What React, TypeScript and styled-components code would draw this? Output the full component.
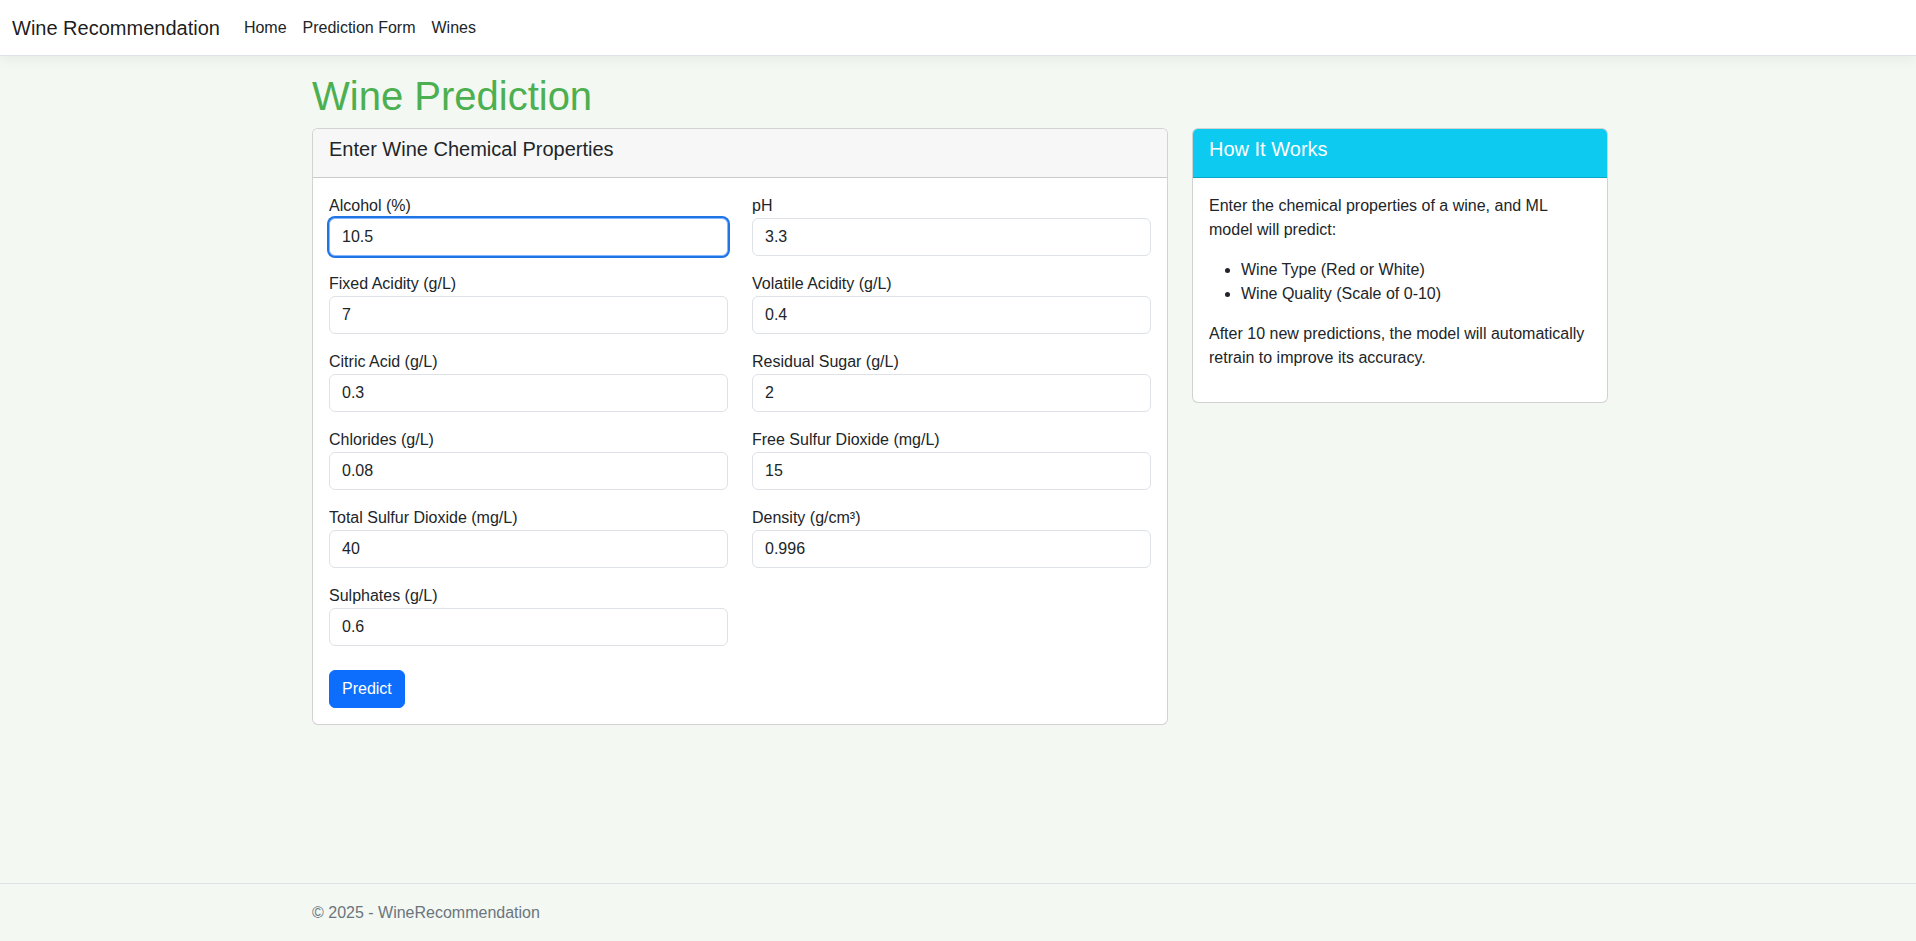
import React from "react";
import styled, { createGlobalStyle } from "styled-components";

const GlobalStyle = createGlobalStyle`
  *, *::before, *::after { box-sizing: border-box; }
  html, body { margin: 0; padding: 0; }
  body {
    font-family: "Liberation Sans", Arial, sans-serif;
    font-size: 16px;
    line-height: 1.5;
    color: #212529;
    background: #f3f8f3;
  }
`;

const Page = styled.div`
  min-height: 100vh;
  display: flex;
  flex-direction: column;
`;

const NavBar = styled.nav`
  height: 56px;
  display: flex;
  align-items: center;
  padding: 0 12px;
  background: #fff;
  border-bottom: 1px solid #dee2e6;
  box-shadow: 0 0.25rem 0.75rem rgba(0, 0, 0, 0.05);
  margin-bottom: 16px;
`;

const Brand = styled.a`
  font-size: 20px;
  line-height: 30px;
  color: rgba(0, 0, 0, 0.9);
  text-decoration: none;
  margin-right: 16px;
`;

const NavList = styled.ul`
  display: flex;
  list-style: none;
  margin: 0;
  padding: 0;
`;

const NavLink = styled.a`
  display: block;
  padding: 8px;
  color: #212529;
  text-decoration: none;
  font-size: 16px;
  line-height: 24px;
`;

const Main = styled.main`
  flex: 1;
  width: 100%;
  max-width: 1320px;
  margin: 0 auto;
  padding: 0 10px 16px 14px;
`;

const Title = styled.h1`
  margin: 0 0 8px;
  font-size: 40px;
  font-weight: 400;
  line-height: 1.2;
  color: #4caf50;
`;

const Row = styled.div`
  display: flex;
  margin: 0 -12px;
`;

const Col = styled.div<{ $span: number }>`
  flex: 0 0 auto;
  width: ${(p) => (p.$span / 12) * 100}%;
  padding: 0 12px;
`;

const Card = styled.div`
  background: #fff;
  border: 1px solid rgba(0, 0, 0, 0.175);
  border-radius: 6px;
  overflow: hidden;
`;

const CardHeader = styled.div<{ $variant?: "info" }>`
  padding: 8px 16px;
  background: ${(p) => (p.$variant === "info" ? "#0dcaf0" : "#f7f7f7")};
  color: ${(p) => (p.$variant === "info" ? "#fff" : "#212529")};
  border-bottom: 1px solid rgba(0, 0, 0, 0.175);
`;

const CardTitle = styled.h5`
  margin: 0 0 8px;
  font-size: 20px;
  font-weight: 400;
  line-height: 1.2;
`;

const CardBody = styled.div`
  padding: 16px;
`;

const FormGrid = styled.div`
  display: grid;
  grid-template-columns: 1fr 1fr;
  column-gap: 24px;
`;

const Field = styled.div`
  margin-bottom: 16px;
`;

const Label = styled.label`
  display: inline-block;
  font-size: 16px;
  line-height: 24px;
`;

const Input = styled.input<{ $focused?: boolean }>`
  display: block;
  width: 100%;
  height: 38px;
  padding: 6px 12px;
  font-family: inherit;
  font-size: 16px;
  line-height: 24px;
  color: #212529;
  background: #fff;
  border: 1px solid ${(p) => (p.$focused ? "#86b7fe" : "#dee2e6")};
  border-radius: 6px;
  outline: none;
  box-shadow: ${(p) => (p.$focused ? "0 0 0 2px #1f74e6" : "none")};
`;

const Actions = styled.div`
  margin-top: 8px;
`;

const Button = styled.button`
  font-family: inherit;
  font-size: 16px;
  line-height: 24px;
  padding: 6px 12px;
  color: #fff;
  background: #0d6efd;
  border: 1px solid #0d6efd;
  border-radius: 6px;
  cursor: pointer;
`;

const Text = styled.p`
  margin: 0 0 16px;
`;

const List = styled.ul`
  margin: 0 0 16px;
  padding-left: 32px;
`;

const Footer = styled.footer`
  height: 58px;
  border-top: 1px solid #dee2e6;
  color: #6c757d;
  line-height: 57px;
  white-space: nowrap;
`;

const FooterInner = styled.div`
  max-width: 1320px;
  margin: 0 auto;
  padding: 0 10px 0 14px;
`;

const fields: [string, string][] = [
  ["Alcohol (%)", "10.5"],
  ["pH", "3.3"],
  ["Fixed Acidity (g/L)", "7"],
  ["Volatile Acidity (g/L)", "0.4"],
  ["Citric Acid (g/L)", "0.3"],
  ["Residual Sugar (g/L)", "2"],
  ["Chlorides (g/L)", "0.08"],
  ["Free Sulfur Dioxide (mg/L)", "15"],
  ["Total Sulfur Dioxide (mg/L)", "40"],
  ["Density (g/cm³)", "0.996"],
  ["Sulphates (g/L)", "0.6"],
];

export default function App() {
  return (
    <>
      <GlobalStyle />
      <Page>
        <NavBar>
          <Brand href="#">Wine Recommendation</Brand>
          <NavList>
            <li><NavLink href="#">Home</NavLink></li>
            <li><NavLink href="#">Prediction Form</NavLink></li>
            <li><NavLink href="#">Wines</NavLink></li>
          </NavList>
        </NavBar>
        <Main>
          <Title>Wine Prediction</Title>
          <Row>
            <Col $span={8}>
              <Card>
                <CardHeader>
                  <CardTitle>Enter Wine Chemical Properties</CardTitle>
                </CardHeader>
                <CardBody>
                  <FormGrid>
                    {fields.map(([label, value], i) => (
                      <Field key={label}>
                        <Label>{label}</Label>
                        <Input defaultValue={value} $focused={i === 0} />
                      </Field>
                    ))}
                  </FormGrid>
                  <Actions>
                    <Button type="button">Predict</Button>
                  </Actions>
                </CardBody>
              </Card>
            </Col>
            <Col $span={4}>
              <Card>
                <CardHeader $variant="info">
                  <CardTitle>How It Works</CardTitle>
                </CardHeader>
                <CardBody>
                  <Text>Enter the chemical properties of a wine, and ML model will predict:</Text>
                  <List>
                    <li>Wine Type (Red or White)</li>
                    <li>Wine Quality (Scale of 0-10)</li>
                  </List>
                  <Text>After 10 new predictions, the model will automatically retrain to improve its accuracy.</Text>
                </CardBody>
              </Card>
            </Col>
          </Row>
        </Main>
        <Footer>
          <FooterInner>© 2025 - WineRecommendation</FooterInner>
        </Footer>
      </Page>
    </>
  );
}
